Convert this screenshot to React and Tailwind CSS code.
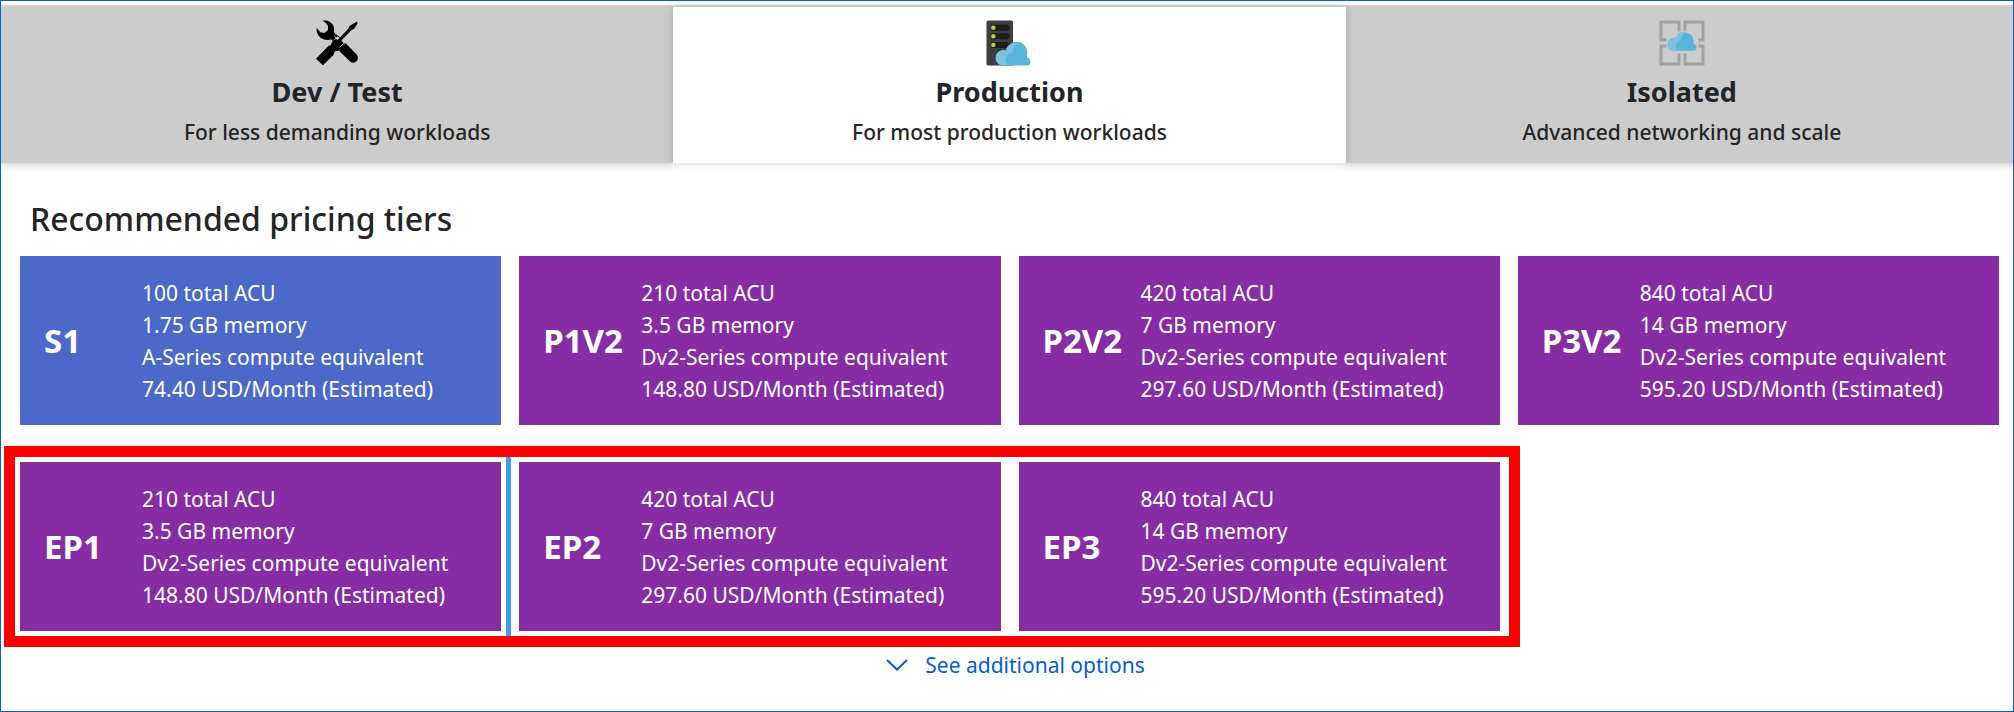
function ToolsIcon() {
  return (
    <svg className="h-[46px] w-[44px]" viewBox="26 19.5 44 46" aria-hidden="true">
      <path d="M33.5 20.3C37.5 19 42 20.8 44 24.6c1.2 2.3 1.4 4.800.8 7.200l3.700 3.700-3.300 3.400-.9 2.400-2-2.600c-3.200 1.300-8 1-11-1.700-3.200-2.800-4.400-6.800-3.300-9.400l3.200 4.200 4.300.6 3.400-2.900.2-4.200-2.300-2.900z" />
      <path d="M52.500 46.800l4.200-4 10.600 10.800c4.500 4.900-1.500 11.300-6.200 7.500L50 50.300z" />
      <path d="M67.500 21.300l1.400 1.200-3.500 5.400-3.300 2-9.800 10.100 3 3.200-2 1.400.7 1.600-4.600 4-3.500.6-1.500 3.600-10.500 10.400-6.900-6.600L39.400 45.600l2.200-.8 2-4 3.200-2.300 2 .8 1.300-1.300 8.900-9.400 1.500-3.200z" />
      <path d="M47.500 34.500l3.300 2.600M52 48l3.500-5.500" stroke="#000" strokeWidth="1" />
      <path d="M45.200 35.500l3.300 3.200M50.500 47l4.300-4.200" stroke="#ccc" strokeWidth="1" />
    </svg>
  );
}

function ServerIcon() {
  return (
    <svg className="h-[46px] w-[46px]" viewBox="16.500 19.5 46 46" aria-hidden="true">
      <path d="M18.600 20h23.300a1.600 1.600 0 0 1 1.600 1.600V65H18.600a1.600 1.600 0 0 1-1.600-1.600V21.600a1.600 1.600 0 0 1 1.600-1.600z" fill="#3e3e3e" />
      <g fill="#1e1e1e">
        <rect x="21" y="24.200" width="19" height="6" rx="3" />
        <rect x="21" y="32.800" width="19" height="6" rx="3" />
        <rect x="21" y="41.400" width="19" height="6" rx="3" />
      </g>
      <g fill="#b8d432">
        <circle cx="23.800" cy="27.200" r="2.200" />
        <circle cx="23.800" cy="35.800" r="2.200" />
        <circle cx="23.800" cy="44.400" r="2.200" />
      </g>
      <path d="M58 65H33.700a7.600 7.600 0 0 1 0-15.200l2.700.3a10.700 10.700 0 0 1 21.200 3.800l-.2 3.100A4.100 4.100 0 0 1 58 65z" fill="#59b4d9" />
      <path d="M38.500 65h-4.800a7.600 7.600 0 0 1 0-15.200l2.700.3c1.200-4.600 5.800-8.200 12-7.100-3.200 1.500-5.600 5-5.200 9.300-7.200.4-9.700 8.200-4.700 12.700z" fill="#7ac3e1" />
    </svg>
  );
}

function IsolatedIcon() {
  return (
    <svg className="h-[46px] w-[46px]" viewBox="18.500 19.500 46 46" aria-hidden="true">
      <path
        d="M38.500 31V21.500H20.500V39.500H26M44.500 31V21.500H62.500V39.500H58M38.500 53V63.500H20.500V45.500H26M44.500 53V63.500H62.500V45.500H58"
        fill="none"
        stroke="#a0a1a2"
        strokeWidth="3"
      />
      <path d="M52.500 50.300H33.500a6.500 6.500 0 0 1 0-13l2-.1a9.200 9.200 0 0 1 17.500 3.100l-.1 3.200a3.400 3.400 0 0 1-.4 6.800z" fill="#59b4d9" stroke="#ccc" strokeWidth="2" paintOrder="stroke" />
      <path d="M37.500 50.300h-4a6.500 6.500 0 0 1 0-13l2-.1c1.300-4 5-6.200 9.500-5-2.800 1.300-4.300 4-4.100 7.200-6 .4-7.500 7.300-3.400 10.900z" fill="#7ac3e1" />
    </svg>
  );
}

const tabs = [
  { title: "Dev / Test", text: "For less demanding workloads", Icon: ToolsIcon },
  { title: "Production", text: "For most production workloads", Icon: ServerIcon, selected: true },
  { title: "Isolated", text: "Advanced networking and scale", Icon: IsolatedIcon },
];

const dv2 = "Dv2-Series compute equivalent";

const standardTiers = [
  { name: "S1", lines: ["100 total ACU", "1.75 GB memory", "A-Series compute equivalent", "74.40 USD/Month (Estimated)"], blue: true },
  { name: "P1V2", lines: ["210 total ACU", "3.5 GB memory", dv2, "148.80 USD/Month (Estimated)"] },
  { name: "P2V2", lines: ["420 total ACU", "7 GB memory", dv2, "297.60 USD/Month (Estimated)"] },
  { name: "P3V2", lines: ["840 total ACU", "14 GB memory", dv2, "595.20 USD/Month (Estimated)"] },
];

const elasticTiers = [
  { name: "EP1", lines: ["210 total ACU", "3.5 GB memory", dv2, "148.80 USD/Month (Estimated)"] },
  { name: "EP2", lines: ["420 total ACU", "7 GB memory", dv2, "297.60 USD/Month (Estimated)"] },
  { name: "EP3", lines: ["840 total ACU", "14 GB memory", dv2, "595.20 USD/Month (Estimated)"] },
];

function Tab({ title, text, Icon, selected }) {
  return (
    <button
      type="button"
      role="tab"
      aria-selected={Boolean(selected)}
      className={
        "flex flex-col items-center py-[13px] " +
        (selected ? "relative bg-white shadow-[0_0_8px_rgba(0,0,0,0.2)]" : "bg-[#ccc] shadow-[0_2px_8px_rgba(0,0,0,0.2)]")
      }
    >
      <Icon />
      <span className="mt-2 text-[27px] leading-9 font-bold text-[#212529]">{title}</span>
      <span className="mt-1 text-[21px] leading-9 font-medium text-[#252525]">{text}</span>
    </button>
  );
}

function Tier({ name, lines, blue }) {
  return (
    <button
      type="button"
      className={"flex items-center pt-[21px] pb-5 pl-6 text-left text-white " + (blue ? "bg-[#4c68c9]" : "bg-[#862da6]")}
    >
      <span className="w-[98px] shrink-0 text-[33px] leading-10 font-bold">{name}</span>
      <span className="flex flex-col text-[21px] leading-8 whitespace-nowrap">
        {lines.map((line) => (
          <span key={line}>{line}</span>
        ))}
      </span>
    </button>
  );
}

export default function App() {
  return (
    <main className="min-h-screen overflow-hidden border border-[#0a5bd3] bg-white font-['Noto_Sans','Open_Sans',sans-serif]">
      <div role="tablist" className="-mr-[5px] mt-1 grid grid-cols-3 border-t-2 border-[#dcdcdc]">
        {tabs.map((tab) => (
          <Tab key={tab.title} {...tab} />
        ))}
      </div>
      <section className="pr-[14px] pl-[19px]">
        <h1 className="mt-8 pl-[10px] text-[32px] leading-[48px] font-medium text-[#252525]">Recommended pricing tiers</h1>
        <div className="mt-[13px] grid grid-cols-4 gap-x-[18px] gap-y-[37px]">
          {standardTiers.map((tier) => (
            <Tier key={tier.name} {...tier} />
          ))}
          <div className="relative col-span-3 grid grid-cols-3 gap-x-[18px]">
            {elasticTiers.map((tier, i) =>
              i === 0 ? (
                <div key={tier.name} className="relative grid">
                  <Tier {...tier} />
                  <div className="absolute -inset-y-[5px] -right-[10px] w-[5px] bg-[#429bf5]" />
                </div>
              ) : (
                <Tier key={tier.name} {...tier} />
              ),
            )}
            <div className="pointer-events-none absolute -inset-y-4 -right-5 -left-4 border-[11px] border-[#f00]" />
          </div>
        </div>
        <div className="mt-4 flex justify-center pl-3">
          <button type="button" className="flex items-center gap-[17px] text-[21px] leading-9 text-[#015cda]">
            <svg className="h-3 w-[22px]" viewBox="0 0 22 12" fill="none" stroke="currentColor" strokeWidth="2" aria-hidden="true">
              <path d="M1 1l10 9.500L21 1" />
            </svg>
            See additional options
          </button>
        </div>
      </section>
    </main>
  );
}
